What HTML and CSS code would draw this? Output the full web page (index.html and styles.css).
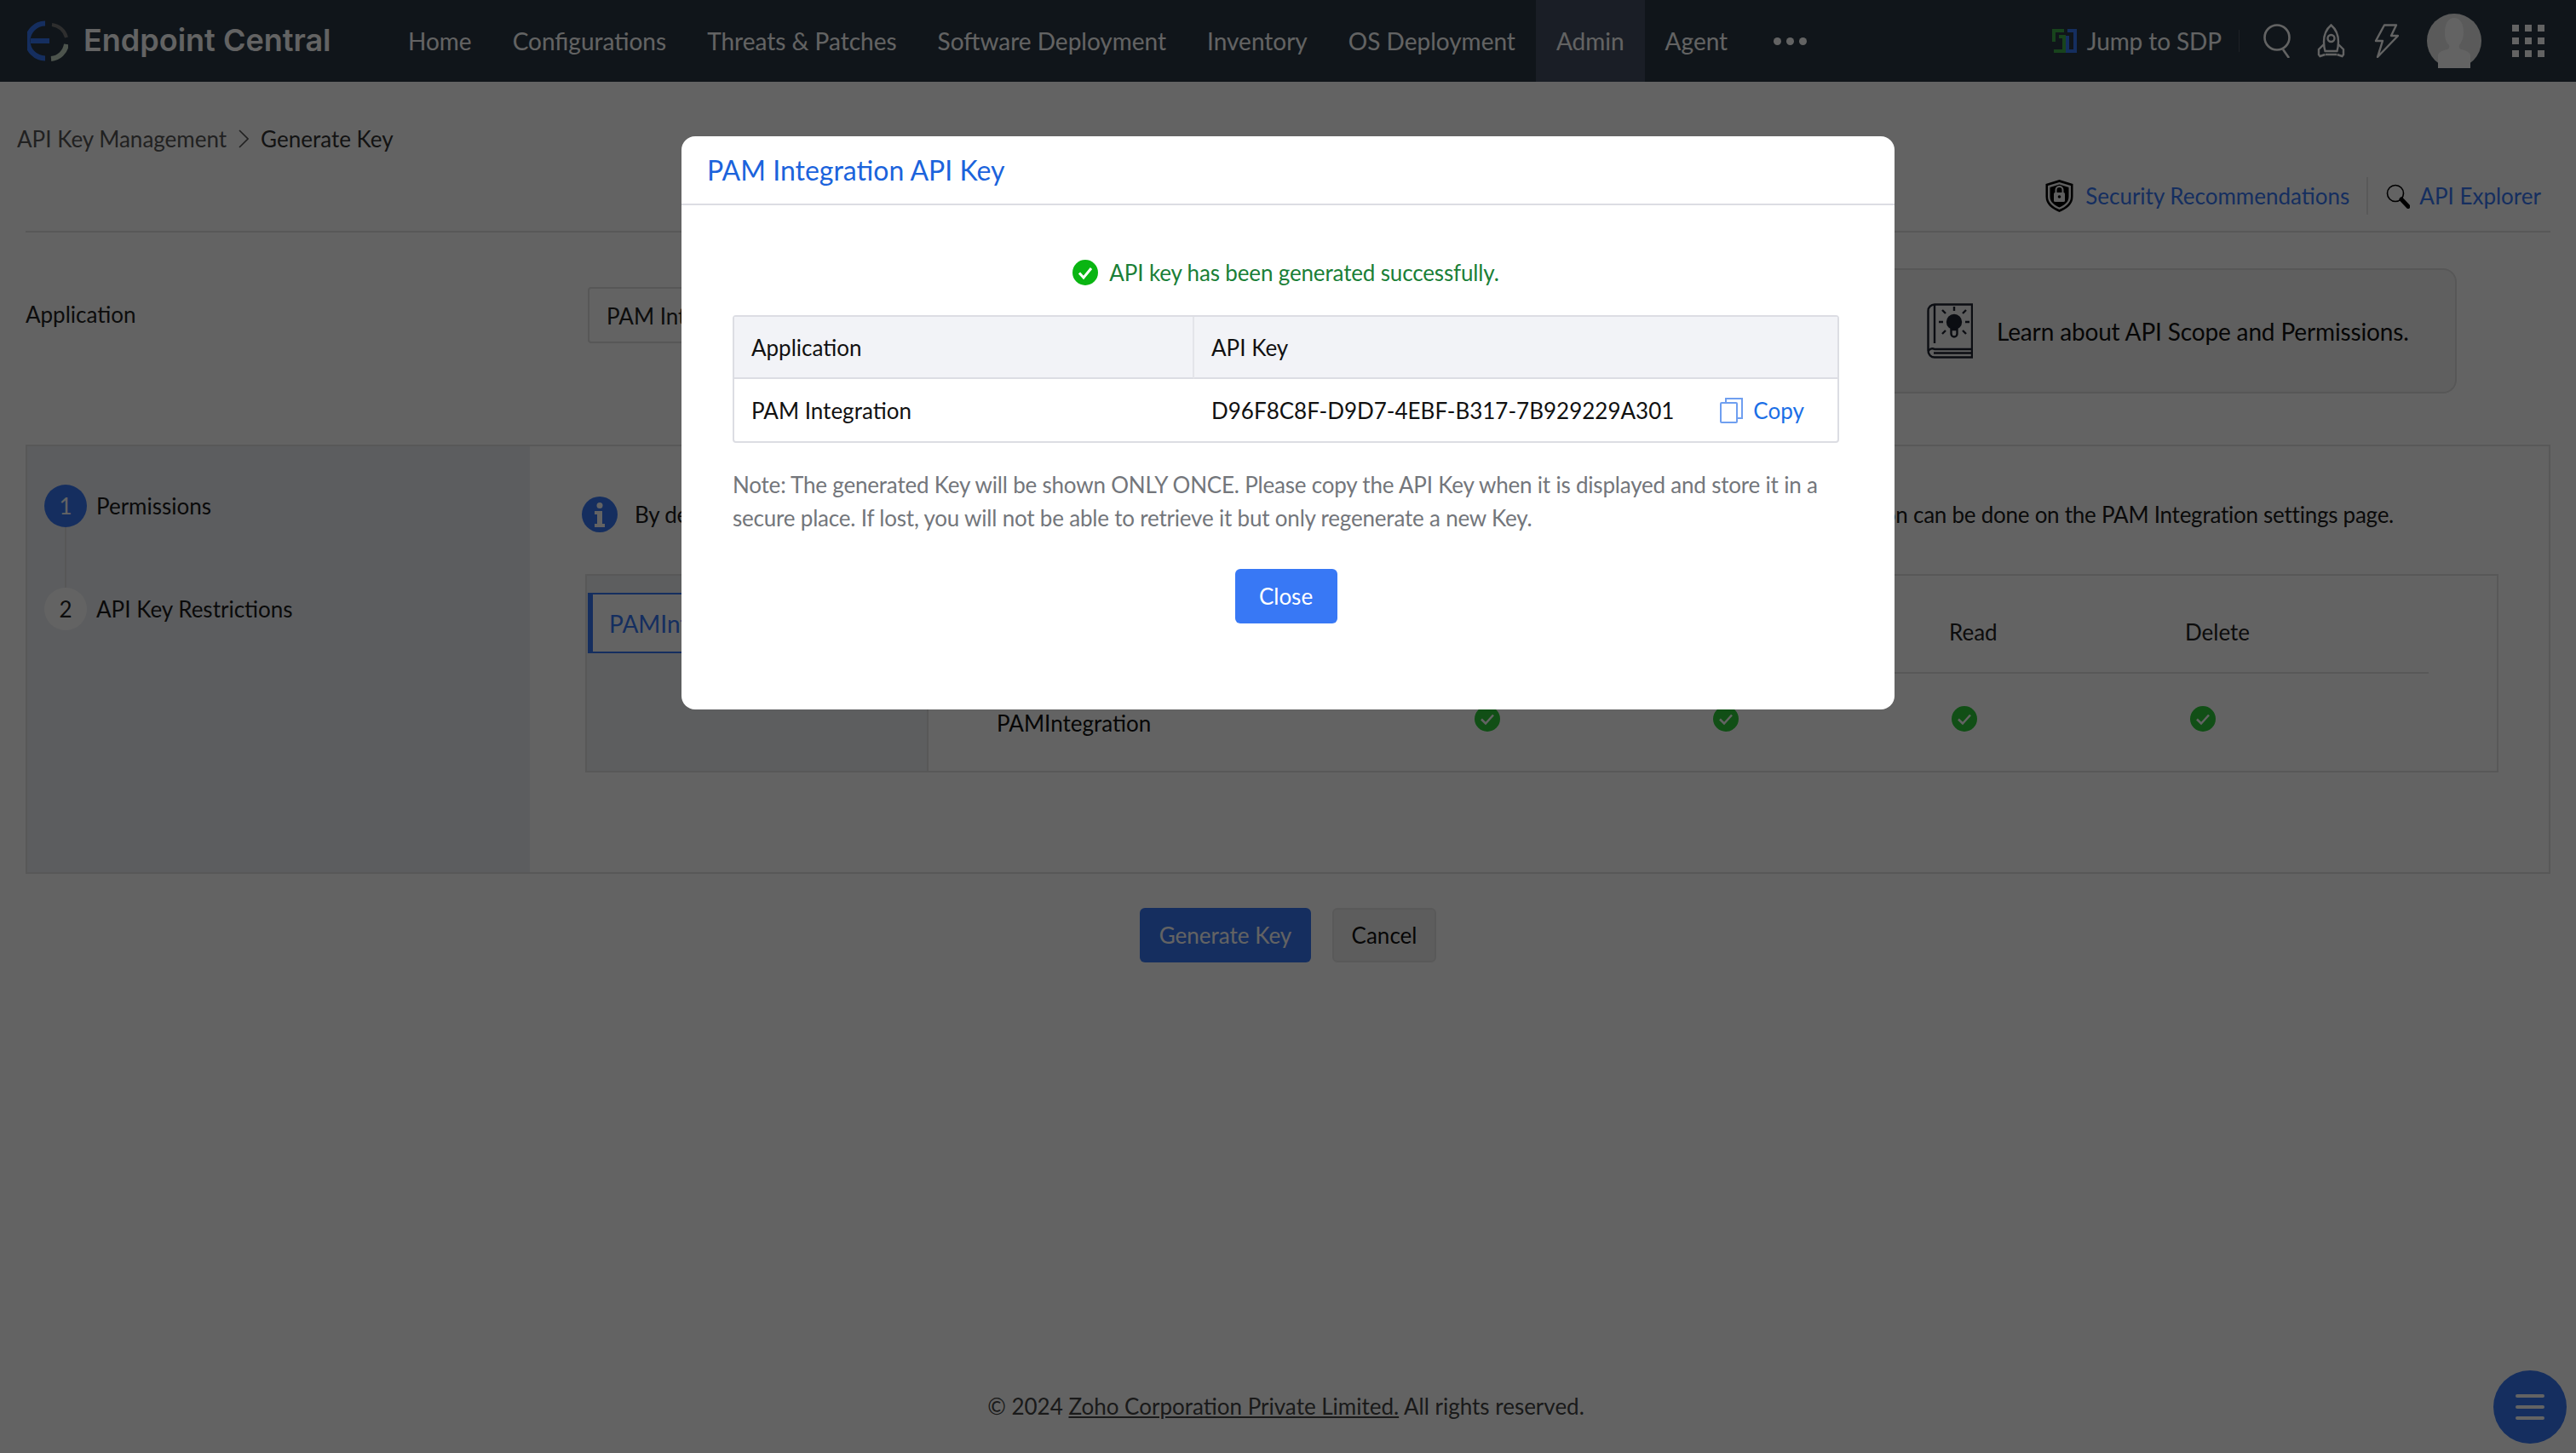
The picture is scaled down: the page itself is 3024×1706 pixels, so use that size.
FILE: index.html
```html
<!DOCTYPE html>
<html lang="en">
<head>
<meta charset="utf-8">
<title>Generate Key</title>
<link rel="stylesheet" href="styles.css">
</head>
<body>
<div class="page">
  <header class="nav">
    <div class="brand">
      <svg class="logo" viewBox="0 0 48 48" fill="none">
        <path d="M21 3.500A20.500 20.500 0 0 0 21 44.500" stroke="#3878f5" stroke-width="6"/>
        <path d="M4 24H26" stroke="#3878f5" stroke-width="6"/>
        <path d="M29 5A20 20 0 0 1 46 20" stroke="#777" stroke-width="4"/>
        <path d="M46 28A20 20 0 0 1 28 45" stroke="#c6d8c6" stroke-width="6"/>
      </svg>
      <span class="brand-name">Endpoint Central</span>
    </div>
    <nav class="menu">
      <a class="menu-item">Home</a>
      <a class="menu-item">Configurations</a>
      <a class="menu-item">Threats &amp; Patches</a>
      <a class="menu-item">Software Deployment</a>
      <a class="menu-item">Inventory</a>
      <a class="menu-item">OS Deployment</a>
      <a class="menu-item is-active">Admin</a>
      <a class="menu-item">Agent</a>
      <span class="more"><i></i><i></i><i></i></span>
    </nav>
    <div class="tools">
      <svg class="sdp" viewBox="0 0 31 30" fill="none" stroke-width="4">
        <path d="M15 3H3V16M9 10H15V27H3" stroke="#3fae4a"/>
        <path d="M19 3H28V27H19V9" stroke="#3878f5"/>
      </svg>
      <span class="sdp-label">Jump to SDP</span>
      <span class="tool-sep"></span>
      <svg class="ic-search" viewBox="0 0 32 40" fill="none" stroke="#fff" stroke-width="2.6">
        <circle cx="16" cy="16" r="14.500"/><path d="M23 30l7 10"/>
      </svg>
      <svg class="ic-rocket" viewBox="0 0 33 40" fill="none" stroke="#fff" stroke-width="2.4">
        <path d="M16.500 1.500C10 7 8 14 8 21c0 4 .6 8 1.500 11h14C24.400 29 25 25 25 21 25 14 23 7 16.500 1.500Z"/>
        <circle cx="16.500" cy="17" r="4"/>
        <path d="M8 24l-6 6v6l1.500 2 6-2M25 24l6 6v6l-1.500 2-6-2M10 36h13"/>
      </svg>
      <svg class="ic-bolt" viewBox="0 0 29 40" fill="none" stroke="#fff" stroke-width="2.4" stroke-linejoin="round">
        <path d="M12 1.500h14L20 14h8L4 39l6-19H2Z"/>
      </svg>
      <svg class="avatar" viewBox="0 0 64 64">
        <circle cx="32" cy="32" r="32" fill="#e8e8e8"/>
        <path d="M13 64V50c0-4 3-6 11-8 2-1 3-3 2-5-4-4-5-9-5-15 0-10 4-17 11-17s11 7 11 17c0 6-2 11-5 15-1 2 0 4 2 5 8 2 11 4 11 8v14Z" fill="#fff"/>
      </svg>
      <span class="apps">
        <i></i><i></i><i></i><i></i><i></i><i></i><i></i><i></i><i></i>
      </span>
    </div>
  </header>

  <main class="content">
    <section class="top">
      <div class="crumbs">
        <span class="crumb">API Key Management</span>
        <svg class="crumb-arrow" viewBox="0 0 12 22" fill="none" stroke="#555" stroke-width="1.600"><path d="M1 1l10 10L1 21"/></svg>
        <span class="crumb-current">Generate Key</span>
      </div>
      <div class="links">
        <svg class="ic-shield" viewBox="0 0 33 38">
          <path d="M16.500 0l16 5v15c0 9-7 14-16 18C7.500 34 .5 29 .5 20V5Z" fill="#000"/>
          <path d="M16.500 3l13.500 4v13c0 7-6 12-13.500 15C9 32 3 27 3 20V7Z" fill="#f4f4f4"/>
          <path d="M16.500 5.500l11 3.500v11c0 6-5 10-11 12.500C10.500 30 5.500 26 5.500 20V9Z" fill="#000"/>
          <rect x="10" y="15" width="13" height="11" rx="1.500" fill="#f4f4f4"/>
          <path d="M12.500 15v-3a4 4 0 0 1 8 0v3" fill="none" stroke="#f4f4f4" stroke-width="2"/>
          <circle cx="16.500" cy="20" r="1.800" fill="#000"/>
        </svg>
        <a class="link">Security Recommendations</a>
        <span class="link-sep"></span>
        <svg class="ic-explorer" viewBox="0 0 28 29" fill="none">
          <circle cx="11" cy="11" r="9.500" stroke="#000" stroke-width="1.600"/>
          <path d="M18 18l8 8.500" stroke="#000" stroke-width="5" stroke-linecap="round"/>
        </svg>
        <a class="link">API Explorer</a>
      </div>
    </section>

    <section class="app-row">
      <label class="app-label">Application</label>
      <div class="app-input">PAM Integration</div>
      <div class="learn">
        <svg class="ic-book" viewBox="0 0 54 65" fill="none" stroke="#1d2230" stroke-width="2.400">
          <path d="M53 54V1.500H9A7.500 7.500 0 0 0 1.500 9V56a7.500 7.500 0 0 0 7.500 7.500H53V54H9a5 5 0 0 0-7.500 3"/>
          <path d="M9 2V47M8 58.500H52"/>
          <circle cx="32" cy="22" r="8" fill="#1d2230"/>
          <path d="M28.500 31h7v5a3.500 3.500 0 0 1-7 0Z"/>
          <path d="M32 4v5M19 22h-5M50 22h-5M22 12l-4-4M42 12l4-4M22 32l-4 4M42 32l4 4"/>
        </svg>
        <span class="learn-text">Learn about API Scope and Permissions.</span>
      </div>
    </section>

    <section class="wizard">
      <aside class="steps">
        <div class="step">
          <span class="step-no is-current">1</span>
          <span class="step-name">Permissions</span>
        </div>
        <span class="step-line"></span>
        <div class="step">
          <span class="step-no">2</span>
          <span class="step-name">API Key Restrictions</span>
        </div>
      </aside>
      <div class="pane">
        <div class="info">
          <svg class="ic-info" viewBox="0 0 42 42">
            <circle cx="21" cy="21" r="21" fill="#3878f5"/>
            <circle cx="21" cy="10.500" r="3.500" fill="#fff"/>
            <path d="M15 17h9v15h3v4H15v-4h3V21h-3Z" fill="#fff"/>
          </svg>
          <p class="info-text">
            <span class="info-head">By default, all the scopes are enabled for this application.</span>
            <span class="info-tail"><span>Any change to the selection can be done on the PAM Integration settings page.</span></span>
          </p>
        </div>
        <div class="scope">
          <div class="scope-tabs">
            <div class="scope-tab">PAMIntegration</div>
          </div>
          <div class="scope-table">
            <div class="scope-row scope-head">
              <span>Scope</span><span>Create</span><span>Update</span><span>Read</span><span>Delete</span>
            </div>
            <div class="scope-row">
              <span class="scope-name">PAMIntegration</span>
              <span class="tick"><svg viewBox="0 0 30 30"><circle cx="15" cy="15" r="15"/><path d="M8 15.500l5 5 9-10"/></svg></span>
              <span class="tick"><svg viewBox="0 0 30 30"><circle cx="15" cy="15" r="15"/><path d="M8 15.500l5 5 9-10"/></svg></span>
              <span class="tick"><svg viewBox="0 0 30 30"><circle cx="15" cy="15" r="15"/><path d="M8 15.500l5 5 9-10"/></svg></span>
              <span class="tick"><svg viewBox="0 0 30 30"><circle cx="15" cy="15" r="15"/><path d="M8 15.500l5 5 9-10"/></svg></span>
            </div>
          </div>
        </div>
      </div>
    </section>

    <div class="actions">
      <button class="btn btn-primary">Generate Key</button>
      <button class="btn btn-cancel">Cancel</button>
    </div>
  </main>

  <footer class="foot">© 2024 <a class="foot-link">Zoho Corporation Private Limited.</a> All rights reserved.</footer>
  <button class="fab" aria-label="Menu"><i></i><i></i><i></i></button>
</div>

<div class="overlay"></div>

<div class="modal" role="dialog">
  <h2 class="modal-title">PAM Integration API Key</h2>
  <div class="modal-body">
    <div class="success">
      <svg class="ic-success" viewBox="0 0 30 30"><circle cx="15" cy="15" r="15"/><path d="M8 15.500l5 5.500 9-11"/></svg>
      <span>API key has been generated successfully.</span>
    </div>
    <table class="key-table">
      <thead>
        <tr><th class="col-app">Application</th><th>API Key</th></tr>
      </thead>
      <tbody>
        <tr>
          <td class="col-app">PAM Integration</td>
          <td>
            <div class="key-cell">
              <span class="key-value">D96F8C8F-D9D7-4EBF-B317-7B929229A301</span>
              <a class="copy">
                <svg class="ic-copy" viewBox="0 0 27 30" fill="none" stroke="#6f9ff0" stroke-width="2">
                  <rect x="1" y="6" width="19" height="23" rx="1"/>
                  <path d="M7 6V1h19v23h-6"/>
                </svg>
                Copy
              </a>
            </div>
          </td>
        </tr>
      </tbody>
    </table>
    <p class="note">Note: The generated Key will be shown ONLY ONCE. Please copy the API Key when it is displayed and store it in a secure place. If lost, you will not be able to retrieve it but only regenerate a new Key.</p>
    <div class="modal-actions"><button class="btn btn-close">Close</button></div>
  </div>
</div>
</body>
</html>
```
FILE: styles.css
```css
* { box-sizing: border-box; }
html, body { margin: 0; padding: 0; }
body {
  font-family: Lato, "Noto Sans", sans-serif;
  font-size: 26px;
  color: #222;
  background: #fff;
  width: 3024px;
  height: 1706px;
  overflow: hidden;
}
p, h2 { margin: 0; }
i { display: block; }

.page {
  position: relative;
  display: flex;
  flex-direction: column;
  height: 1706px;
}

/* top navigation */
.nav {
  display: flex;
  align-items: center;
  height: 96px;
  flex: none;
  font-size: 28px;
  background: #293845;
  color: #fff;
}
.brand { display: flex; align-items: center; width: 455px; padding-left: 32px; }
.logo { width: 48px; height: 48px; flex: none; }
.brand-name {
  margin-left: 18px;
  font-family: Inter, sans-serif;
  font-size: 36px;
  font-weight: 600;
  white-space: nowrap;
  position: relative;
  top: -1px;
}
.menu { display: flex; align-items: stretch; height: 96px; }
.menu-item {
  display: flex;
  align-items: center;
  padding: 0 24px;
  white-space: nowrap;
}
.menu-item.is-active { background: #454f62; }
.more { display: flex; align-items: center; gap: 6px; margin-left: 30px; }
.more i { width: 9px; height: 9px; border-radius: 50%; background: #fff; }

.tools { display: flex; align-items: center; margin-left: auto; padding-right: 37px; }
.sdp { width: 31px; height: 30px; }
.sdp-label { margin-left: 11px; white-space: nowrap; letter-spacing: -.1px; }
.tool-sep { width: 1px; height: 26px; margin-left: 20px; background: #4b5763; }
.ic-search { width: 32px; height: 40px; margin-left: 28px; }
.ic-rocket { width: 33px; height: 40px; margin-left: 31px; }
.ic-bolt { width: 29px; height: 40px; margin-left: 34px; }
.avatar { width: 64px; height: 64px; margin-left: 33px; }
.apps {
  display: grid;
  grid-template-columns: repeat(3, 8px);
  grid-auto-rows: 8px;
  gap: 7px;
  margin-left: 36px;
}
.apps i { background: #fff; }

/* page body */
.content { display: flex; flex-direction: column; padding: 0 30px; }
.top {
  display: flex;
  flex-direction: column;
  height: 177px;
  border-bottom: 2px solid #e2e2e2;
}
.crumbs { display: flex; align-items: center; height: 40px; margin: 47px 0 0 -10px; }
.crumb { color: #555; }
.crumb-arrow { width: 12px; height: 22px; margin: 0 14px; }
.crumb-current { color: #333; }
.links { display: flex; align-items: center; justify-content: flex-end; height: 44px; margin-top: 25px; padding-right: 11px; }
.ic-shield { width: 33px; height: 38px; }
.link { margin-left: 14px; color: #3878f5; white-space: nowrap; }
.link-sep { width: 2px; height: 44px; margin-left: 20px; background: #e4e4e4; }
.ic-explorer { width: 28px; height: 29px; margin-left: 21px; }
.ic-explorer + .link { margin-left: 11px; }

.app-row { display: flex; align-items: flex-start; height: 249px; }
.app-label { width: 660px; margin-top: 76px; line-height: 40px; }
.app-input {
  width: 800px;
  height: 66px;
  margin-top: 64px;
  padding: 0 20px;
  line-height: 64px;
  border: 2px solid #dfdfdf;
  border-radius: 4px;
}
.learn {
  display: flex;
  align-items: center;
  width: 712px;
  height: 147px;
  margin-top: 42px;
  margin-left: auto;
  margin-right: 110px;
  padding-left: 88px;
  background: #f5f5f5;
  border: 2px solid #e0e0e0;
  border-radius: 16px;
}
.ic-book { width: 54px; height: 65px; flex: none; }
.learn-text { margin-left: 28px; font-size: 28px; letter-spacing: -.15px; color: #111; white-space: nowrap; }

.wizard { display: flex; height: 504px; border: 2px solid #e2e2e2; }
.steps { position: relative; width: 590px; flex: none; padding: 45px 0 0 20px; background: #edeff4; }
.step { display: flex; align-items: center; height: 50px; }
.step-no {
  display: flex;
  align-items: center;
  justify-content: center;
  width: 50px;
  height: 50px;
  flex: none;
  border-radius: 50%;
  background: #fff;
}
.step-no.is-current { background: #3878f5; color: #fff; }
.step-name { margin-left: 11px; color: #1a1a1a; white-space: nowrap; }
.step-line { display: block; width: 2px; height: 71px; margin-left: 24px; background: #e0e0e0; }

.pane { flex: 1; min-width: 0; padding: 59px 59px 0 65px; }
.info { display: flex; align-items: center; height: 42px; margin-left: -4px; }
.ic-info { width: 42px; height: 42px; flex: none; }
.info-text {
  display: flex;
  justify-content: space-between;
  flex: 1;
  margin: 0 123px 0 20px;
  letter-spacing: -.25px;
  color: #1a1a1a;
  white-space: nowrap;
}
/* the sentence runs behind the dialog: only its two ends are ever visible */
.info-head { display: block; width: 55px; overflow: hidden; }
.info-tail { display: flex; justify-content: flex-end; width: 586px; overflow: hidden; }

.scope { display: flex; height: 233px; margin-top: 49px; border: 2px solid #e2e2e2; }
.scope-tabs { width: 401px; flex: none; padding-top: 20px; background: #f0f1f4; border-right: 2px solid #e2e2e2; }
.scope-tab {
  height: 71px;
  padding-left: 19px;
  font-size: 28px;
  line-height: 68px;
  color: #3878f5;
  background: #fff;
  border: 2px solid #3878f5;
  border-left-width: 6px;
  border-right: 0;
  margin-left: 1px;
  overflow: hidden;
}
.scope-table { flex: 1; min-width: 0; padding: 0 80px 0 80px; }
.scope-row { display: grid; grid-template-columns: 558px 280px 280px 280px 1fr; }
.scope-head { height: 115px; padding-top: 46px; line-height: 40px; border-bottom: 2px solid #e2e2e2; }
.scope-head span:last-child { margin-left: -3px; }
.scope-name { margin-top: 38px; line-height: 40px; color: #111; }
.tick { margin-top: 38px; padding-left: 3px; }
.tick svg { display: block; width: 30px; height: 30px; }
.tick circle { fill: #2ecb3a; }
.tick path { fill: none; stroke: #fff; stroke-width: 2.5; }

.actions { display: flex; justify-content: center; gap: 25px; margin-top: 40px; }
.btn {
  height: 64px;
  font-family: inherit;
  font-size: 26px;
  border: 0;
  border-radius: 6px;
  padding: 0;
}
.btn-primary { width: 201px; background: #3878f5; color: #fff; }
.btn-cancel { width: 122px; background: #f0f0f0; color: #111; border: 2px solid #e6e6e6; }

.foot {
  margin-top: auto;
  padding: 0 5px 35px 0;
  line-height: 40px;
  text-align: center;
  color: #444;
}
.foot-link { text-decoration: underline; }
.fab {
  position: absolute;
  right: 11px;
  bottom: 11px;
  display: flex;
  flex-direction: column;
  align-items: center;
  justify-content: center;
  gap: 9px;
  width: 86px;
  height: 86px;
  padding: 0;
  border: 0;
  border-radius: 50%;
  background: #3878f5;
}
.fab i { width: 34px; height: 4px; border-radius: 2px; background: #fff; }

/* modal */
.overlay { position: fixed; inset: 0; background: rgba(0, 0, 0, .61); }
.modal {
  position: absolute;
  left: 800px;
  top: 160px;
  width: 1424px;
  height: 673px;
  background: #fff;
  border-radius: 16px;
}
.modal-title {
  height: 81px;
  padding-left: 30px;
  font-size: 32px;
  font-weight: 400;
  line-height: 80px;
  color: #1b63dc;
  border-bottom: 2px solid #dcdde3;
}
.modal-body { padding: 49px 65px 0 60px; }
.success {
  display: flex;
  align-items: center;
  justify-content: center;
  gap: 13px;
  height: 60px;
  letter-spacing: -.15px;
  color: #1a7f37;
}
.ic-success { width: 30px; height: 30px; }
.ic-success circle { fill: #0ab512; }
.ic-success path { fill: none; stroke: #fff; stroke-width: 3; }

.key-table {
  width: 100%;
  margin-top: 20px;
  border-collapse: separate;
  border-spacing: 0;
  border: 2px solid #dcdde3;
  border-radius: 4px;
  color: #111;
}
.key-table th, .key-table td { height: 73px; padding: 0 20px; text-align: left; font-weight: 400; }
.key-table th { background: #f2f3f7; border-bottom: 2px solid #dcdde3; }
.col-app { width: 540px; }
th.col-app { border-right: 2px solid #e4e5ea; }
.key-cell { display: flex; align-items: center; }
.key-value { white-space: nowrap; }
.copy { display: flex; align-items: center; gap: 12px; margin-left: 54px; color: #1b6fe6; }
.ic-copy { width: 27px; height: 30px; }
.note { margin-top: 30px; line-height: 39px; letter-spacing: -.2px; color: #73767b; }
.modal-actions { display: flex; justify-content: center; margin-top: 40px; }
.btn-close { width: 120px; background: #3878f5; color: #fff; }
```
